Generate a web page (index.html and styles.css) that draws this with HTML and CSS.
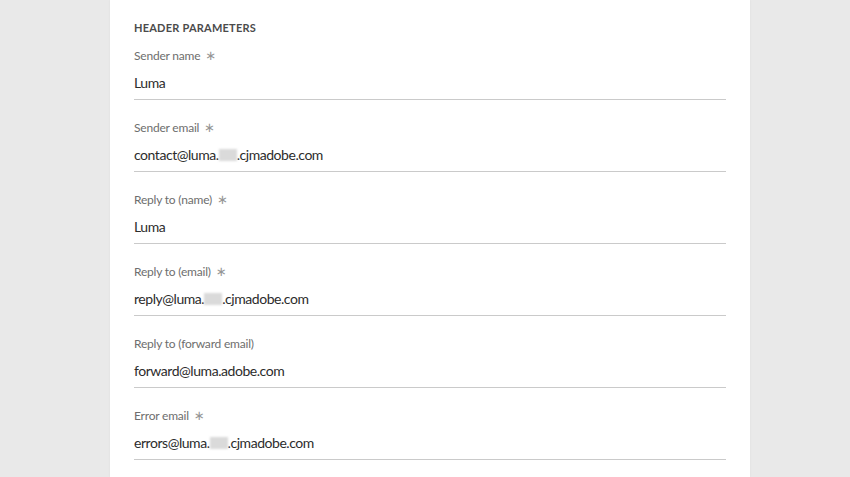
FILE: index.html
```html
<!DOCTYPE html>
<html>
<head>
<meta charset="utf-8">
<link rel="stylesheet" href="styles.css">
</head>
<body>
<div class="page">
  <div class="card">
    <h2 class="section-title">HEADER PARAMETERS</h2>
    <div class="field">
      <div class="label">Sender name <span class="req">∗</span></div>
      <div class="value">Luma</div>
    </div>
    <div class="field">
      <div class="label">Sender email <span class="req">∗</span></div>
      <div class="value">contact@luma.<span class="redact"></span>.cjmadobe.com</div>
    </div>
    <div class="field">
      <div class="label">Reply to (name) <span class="req">∗</span></div>
      <div class="value">Luma</div>
    </div>
    <div class="field">
      <div class="label">Reply to (email) <span class="req">∗</span></div>
      <div class="value">reply@luma.<span class="redact"></span>.cjmadobe.com</div>
    </div>
    <div class="field">
      <div class="label">Reply to (forward email)</div>
      <div class="value">forward@luma.adobe.com</div>
    </div>
    <div class="field">
      <div class="label">Error email <span class="req">∗</span></div>
      <div class="value">errors@luma.<span class="redact"></span>.cjmadobe.com</div>
    </div>
  </div>
</div>
</body>
</html>
```
FILE: styles.css
```css
html, body {
  margin: 0;
  padding: 0;
  height: 100%;
}
body {
  background: #e9e9e9;
  font-family: Lato, "Open Sans", sans-serif;
  overflow: hidden;
}
.page {
  display: flex;
  justify-content: flex-start;
  padding-left: 110px;
  height: 100%;
}
.card {
  width: 592px;
  background: #fff;
  padding: 20px 24px 0 24px;
  box-shadow: 0 0 2px rgba(0,0,0,0.06);
}
.section-title {
  margin: 0 0 12px 0;
  font-size: 11px;
  line-height: 16px;
  font-weight: 700;
  letter-spacing: 0.02em;
  color: #4b4b4b;
}
.field {
  margin-bottom: 20px;
}
.label {
  font-size: 12px;
  line-height: 16px;
  color: #6e6e6e;
  letter-spacing: -0.2px;
  margin-bottom: 9px;
}
.req {
  font-family: "DejaVu Sans", sans-serif;
  font-size: 13px;
  color: #959595;
  margin-left: 2px;
}
.value {
  font-size: 14px;
  line-height: 20px;
  color: #2c2c2c;
  letter-spacing: -0.45px;
  padding-bottom: 6px;
  border-bottom: 1px solid #cacaca;
}
.redact {
  display: inline-block;
  width: 18px;
  height: 12px;
  background: #dadada;
  filter: blur(1px);
  vertical-align: -1px;
}
```
